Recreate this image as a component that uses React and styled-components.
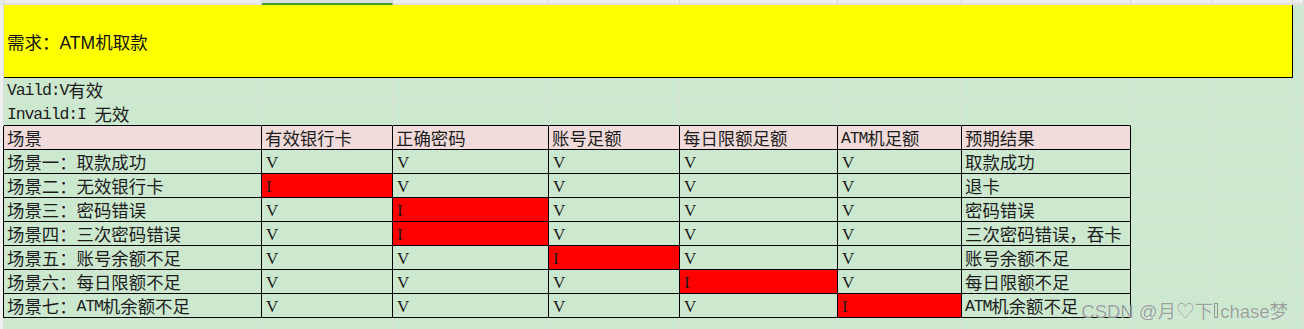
import React from 'react';
import styled, { createGlobalStyle } from 'styled-components';

const COLS = '4px 258px 131px 156px 131px 158px 124px 169px 81px 81px 1fr';
const GRID_LINE = '#dde3dd';
const INK = '#1c1c1c';

const headers = ['场景', '有效银行卡', '正确密码', '账号足额', '每日限额足额', 'ATM机足额', '预期结果'];

const cases = [
  ['场景一：取款成功', 'VVVVV', '取款成功'],
  ['场景二：无效银行卡', 'IVVVV', '退卡'],
  ['场景三：密码错误', 'VIVVV', '密码错误'],
  ['场景四：三次密码错误', 'VIVVV', '三次密码错误，吞卡'],
  ['场景五：账号余额不足', 'VVIVV', '账号余额不足'],
  ['场景六：每日限额不足', 'VVVIV', '每日限额不足'],
  ['场景七：ATM机余额不足', 'VVVVI', 'ATM机余额不足'],
];

/* 영문 구간만 고정폭 글꼴로 분리 */
const renderText = text =>
  text.split(/([A-Za-z: ]+)/).map((part, i) =>
    /^[A-Za-z: ]+$/.test(part) ? <Latin key={i}>{part}</Latin> : part
  );

const App = () => {
  return (
    <>
      <GlobalStyle />
      <Page>
        <ColumnBar>
          {Array.from({ length: 11 }).map((_, i) => (
            <BarCell key={i} $active={i === 2} />
          ))}
        </ColumnBar>

        <TitleBlock>
          <RowHead style={{ gridRow: '1 / 4' }} />
          <TitleCell>需求：ATM机取款</TitleCell>
          <Cell />
          <Cell />
          <Cell />
        </TitleBlock>

        <Row>
          <RowHead />
          <Cell>{renderText('Vaild:V有效')}</Cell>
          {Array.from({ length: 9 }).map((_, i) => (
            <Cell key={i} />
          ))}
        </Row>
        <Row>
          <RowHead />
          <Cell $bottom="#000">{renderText('Invaild:I 无效')}</Cell>
          {Array.from({ length: 9 }).map((_, i) => (
            <Cell key={i} $bottom={i < 6 ? '#000' : undefined} />
          ))}
        </Row>

        <Row>
          <RowHead $edge="#000" />
          {headers.map(h => (
            <Cell key={h} $table $bg="#f2dcdb">
              {renderText(h)}
            </Cell>
          ))}
          <Cell />
          <Cell />
          <Cell />
        </Row>

        {cases.map(([name, marks, result]) => (
          <Row key={name}>
            <RowHead $edge="#000" />
            <Cell $table>{renderText(name)}</Cell>
            {marks.split('').map((m, i) => (
              <Cell key={i} $table $bg={m === 'I' ? '#ff0000' : undefined}>
                <Mark>{m}</Mark>
              </Cell>
            ))}
            <Cell $table>{renderText(result)}</Cell>
            <Cell />
            <Cell />
            <Cell />
          </Row>
        ))}

        <Row>
          <RowHead />
          {Array.from({ length: 10 }).map((_, i) => (
            <Cell key={i} />
          ))}
        </Row>

        <Watermark>
          CSDN @月♡下<Tofu />chase梦
        </Watermark>
      </Page>
    </>
  );
};

const GlobalStyle = createGlobalStyle`
  html, body {
    margin: 0;
    padding: 0;
    background: #cce8cf;
  }
  * {
    box-sizing: border-box;
  }
`;

const Page = styled.div`
  position: relative;
  width: 1304px;
  height: 329px;
  overflow: hidden;
  background: #cce8cf;
  font-family: 'Liberation Serif', 'Noto Sans CJK SC', serif;
  color: ${INK};
`;

const ColumnBar = styled.div`
  display: grid;
  grid-template-columns: ${COLS};
  height: 5px;
  background: #eeeeee;
`;

const BarCell = styled.div`
  border-right: 1px solid #d6d6d6;
  background: ${props => (props.$active ? '#dedede' : 'transparent')};
  border-bottom: 2px solid ${props => (props.$active ? '#3f9b2d' : '#e2e2e2')};
`;

const TitleBlock = styled.div`
  display: grid;
  grid-template-columns: ${COLS};
  grid-template-rows: 24px 24px 25px;
  > div:nth-child(n + 3) {
    grid-column: 11;
  }
`;

const TitleCell = styled.div`
  grid-column: 2 / 11;
  grid-row: 1 / 4;
  display: flex;
  align-items: center;
  padding: 1px 0 0 3px;
  background: #ffff00;
  border-right: 1px solid #000;
  border-bottom: 1px solid #000;
  font-family: 'Liberation Sans', 'Noto Sans CJK SC', sans-serif;
  font-size: 17.5px;
  color: #111;
`;

const Row = styled.div`
  display: grid;
  grid-template-columns: ${COLS};
  height: 24px;
`;

const RowHead = styled.div`
  background: #efefef;
  border-right: 1px solid ${props => props.$edge || '#dcdcdc'};
`;

const Cell = styled.div`
  display: flex;
  align-items: center;
  padding: 2px 0 0 3px;
  white-space: nowrap;
  background: ${props => props.$bg || 'transparent'};
  border-right: 1px solid ${props => (props.$table ? '#000' : GRID_LINE)};
  border-bottom: 1px solid
    ${props => props.$bottom || (props.$table ? '#000' : GRID_LINE)};
  font-size: 17.4px;
  line-height: 20px;
`;

const Latin = styled.span`
  font-family: 'Liberation Mono', monospace;
  font-size: 16.5px;
  letter-spacing: -1.15px;
  white-space: pre;
`;

const Mark = styled.span`
  font-family: 'Liberation Serif', serif;
  font-size: 17px;
  padding-left: 1px;
`;

const Watermark = styled.div`
  position: absolute;
  right: 16px;
  bottom: 6px;
  display: flex;
  align-items: center;
  font-family: 'Liberation Sans', 'Noto Sans CJK SC', sans-serif;
  font-size: 18.5px;
  color: rgba(120, 130, 122, 0.75);
  text-shadow: 0 0 1px rgba(255, 255, 255, 0.9);
  white-space: nowrap;
  pointer-events: none;
`;

const Tofu = styled.span`
  display: inline-block;
  width: 4px;
  height: 15px;
  margin: 0 2px 0 1px;
  border: 1px solid rgba(120, 130, 122, 0.75);
`;

export default App;
